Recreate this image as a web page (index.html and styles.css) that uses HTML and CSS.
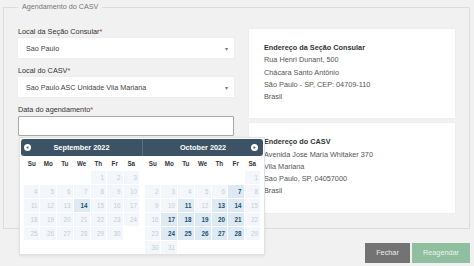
FILE: index.html
```
<!DOCTYPE html>
<html lang="pt-BR">
<head>
<meta charset="UTF-8">
<meta name="viewport" content="width=device-width, initial-scale=1.0">
<title>Agendamento do CASV</title>
<link rel="stylesheet" href="styles.css">
</head>
<body>

<div class="modal">
    <fieldset class="box">
        <legend>Agendamento do CASV</legend>
        <div class="cols">
            <div class="form">
                <div class="field">
                    <label>Local da Seção Consular<span class="req">*</span></label>
                    <div class="select">Sao Paulo<span class="caret">&#9662;</span></div>
                </div>
                <div class="field">
                    <label>Local do CASV<span class="req">*</span></label>
                    <div class="select">Sao Paulo ASC Unidade Vila Mariana<span class="caret">&#9662;</span></div>
                </div>
                <div class="field date">
                    <label for="data">Data do agendamento<span class="req">*</span></label>
                    <input type="text" id="data">

                    <div class="picker">
                        <div class="month first">
                            <div class="month-title">
                                <span class="nav prev"><svg viewBox="0 0 8 8" width="7" height="7"><circle cx="4" cy="4" r="4" fill="#fff"/><path d="M5 2.2 L2.6 4 L5 5.8Z" fill="#3c5365"/></svg></span>
                                September 2022
                            </div>
                            <table>
                                <thead>
                                    <tr><th>Su</th><th>Mo</th><th>Tu</th><th>We</th><th>Th</th><th>Fr</th><th>Sa</th></tr>
                                </thead>
                                <tbody>
                                    <tr><td></td><td></td><td></td><td></td><td class="off">1</td><td class="off">2</td><td class="off">3</td></tr>
                                    <tr><td class="off">4</td><td class="off">5</td><td class="off">6</td><td class="off">7</td><td class="off">8</td><td class="off">9</td><td class="off">10</td></tr>
                                    <tr><td class="off">11</td><td class="off">12</td><td class="off">13</td><td class="on">14</td><td class="off">15</td><td class="off">16</td><td class="off">17</td></tr>
                                    <tr><td class="off">18</td><td class="off">19</td><td class="off">20</td><td class="off">21</td><td class="off">22</td><td class="off">23</td><td class="off">24</td></tr>
                                    <tr><td class="off">25</td><td class="off">26</td><td class="off">27</td><td class="off">28</td><td class="off">29</td><td class="off">30</td><td></td></tr>
                                </tbody>
                            </table>
                        </div>
                        <div class="month last">
                            <div class="month-title">
                                October 2022
                                <span class="nav next"><svg viewBox="0 0 8 8" width="7" height="7"><circle cx="4" cy="4" r="4" fill="#fff"/><path d="M3 2.2 L5.4 4 L3 5.8Z" fill="#3c5365"/></svg></span>
                            </div>
                            <table>
                                <thead>
                                    <tr><th>Su</th><th>Mo</th><th>Tu</th><th>We</th><th>Th</th><th>Fr</th><th>Sa</th></tr>
                                </thead>
                                <tbody>
                                    <tr><td></td><td></td><td></td><td></td><td></td><td></td><td class="off">1</td></tr>
                                    <tr><td class="off">2</td><td class="off">3</td><td class="off">4</td><td class="off">5</td><td class="off">6</td><td class="on">7</td><td class="off">8</td></tr>
                                    <tr><td class="off">9</td><td class="off">10</td><td class="on">11</td><td class="off">12</td><td class="on">13</td><td class="on">14</td><td class="off">15</td></tr>
                                    <tr><td class="off">16</td><td class="on">17</td><td class="on">18</td><td class="on">19</td><td class="on">20</td><td class="on">21</td><td class="off">22</td></tr>
                                    <tr><td class="off">23</td><td class="on">24</td><td class="on">25</td><td class="on">26</td><td class="on">27</td><td class="on">28</td><td class="off">29</td></tr>
                                    <tr><td class="off">30</td><td class="off">31</td><td></td><td></td><td></td><td></td><td></td></tr>
                                </tbody>
                            </table>
                        </div>
                    </div>
                </div>
            </div>

            <div class="info">
                <div class="card">
                    <strong>Endereço da Seção Consular</strong>
                    <span>Rua Henri Dunant, 500</span>
                    <span>Chácara Santo Antônio</span>
                    <span>São Paulo - SP, CEP: 04709-110</span>
                    <span>Brasil</span>
                </div>
                <div class="card">
                    <strong>Endereço do CASV</strong>
                    <span>Avenida Jose Maria Whitaker 370</span>
                    <span>Vila Mariana</span>
                    <span>Sao Paulo, SP, 04057000</span>
                    <span>Brasil</span>
                </div>
            </div>
        </div>
    </fieldset>

    <div class="actions">
        <button class="btn close">Fechar</button>
        <button class="btn save">Reagendar</button>
    </div>
</div>

</body>
</html>
```

FILE: styles.css
```
body {
    margin: 0;
    background-color: #f1f1f1;
    font-family: "Liberation Sans", Arial, sans-serif;
    color: #333;
}

.modal {
    padding-top: 3px;
}

.box {
    margin: 0 4px 0 3px;
    padding: 15px 14px 15px 14px;
    border: 1px solid #dcdcdc;
    min-width: 0;
}

.box legend {
    padding: 0 4px;
    font-size: 7.2px;
    line-height: 8px;
    color: #777;
}

.cols {
    display: grid;
    grid-template-columns: 216px 1fr;
    gap: 15px;
}

/* left side: form */
.field {
    margin-bottom: 7px;
}

.field:last-child {
    margin-bottom: 0;
}

.field label {
    display: block;
    font-size: 7.3px;
    line-height: 12px;
    color: #333;
}

.req {
    color: #c0392b;
}

.select {
    height: 20px;
    display: flex;
    align-items: center;
    justify-content: space-between;
    padding: 0 6px 0 8px;
    background-color: #fff;
    box-shadow: 0 0 1px rgba(0, 0, 0, 0.08);
    font-size: 7.2px;
    color: #444;
}

.caret {
    font-size: 6px;
    color: #777;
}

.date {
    position: relative;
}

.date input {
    display: block;
    width: 100%;
    height: 20px;
    margin: 0;
    border: 1px solid #a8a8a8;
    border-radius: 1px;
    background-color: #fff;
    box-sizing: border-box;
}

/* datepicker popup */
.picker {
    position: absolute;
    top: 100%;
    left: 1px;
    margin-top: 1px;
    width: 246px;
    height: 118px;
    box-sizing: border-box;
    padding: 1px;
    display: flex;
    background-color: #fff;
    border: 1px solid #e2e2e2;
    box-shadow: 0 1px 3px rgba(0, 0, 0, 0.08);
    z-index: 2;
}

.month {
    flex: 1;
}

.month-title {
    position: relative;
    height: 17px;
    line-height: 17px;
    text-align: center;
    background-color: #3c5365;
    color: #fff;
    font-size: 7.3px;
    font-weight: bold;
}

.month.first .month-title {
    border-radius: 3px 0 0 3px;
}

.month.last .month-title {
    border-radius: 0 3px 3px 0;
    border-left: 1px solid #5a6e7e;
}

.nav {
    position: absolute;
    top: 5px;
    line-height: 0;
}

.nav.prev {
    left: 3px;
}

.nav.next {
    right: 5px;
}

.month table {
    width: 117px;
    margin: 0 auto;
    border-collapse: separate;
    border-spacing: 1px 1px;
    font-size: 6.3px;
}

.month th {
    height: 13px;
    padding: 0;
    font-weight: bold;
    color: #333;
    text-align: center;
}

.month td {
    height: 13px;
    padding: 0 2px 0 0;
    text-align: right;
}

.month td.off {
    background-color: #f3f7fb;
    color: #c4cdd4;
}

.month td.on {
    background-color: #dde9f3;
    color: #24506f;
    font-weight: bold;
}

/* right side: addresses */
.info {
    margin-top: 3px;
    display: flex;
    flex-direction: column;
    gap: 5px;
}

.card {
    display: flex;
    flex-direction: column;
    padding: 13px 14px 15px 15px;
    background-color: #fff;
    box-shadow: 0 0 2px rgba(0, 0, 0, 0.04);
    font-size: 7.3px;
    line-height: 12.25px;
    color: #555;
}

.card strong {
    color: #333;
}

.actions {
    display: flex;
    justify-content: flex-end;
    gap: 2px;
    margin-top: 14px;
    padding-right: 4px;
}

.btn {
    height: 20px;
    border: none;
    border-radius: 0;
    font-family: "Liberation Sans", Arial, sans-serif;
    font-size: 7.3px;
    cursor: pointer;
}

.btn.close {
    width: 45px;
    background-color: #737373;
    color: #ececec;
}

.btn.save {
    width: 58px;
    background-color: #8fbf9e;
    color: #e8f3eb;
}
```
